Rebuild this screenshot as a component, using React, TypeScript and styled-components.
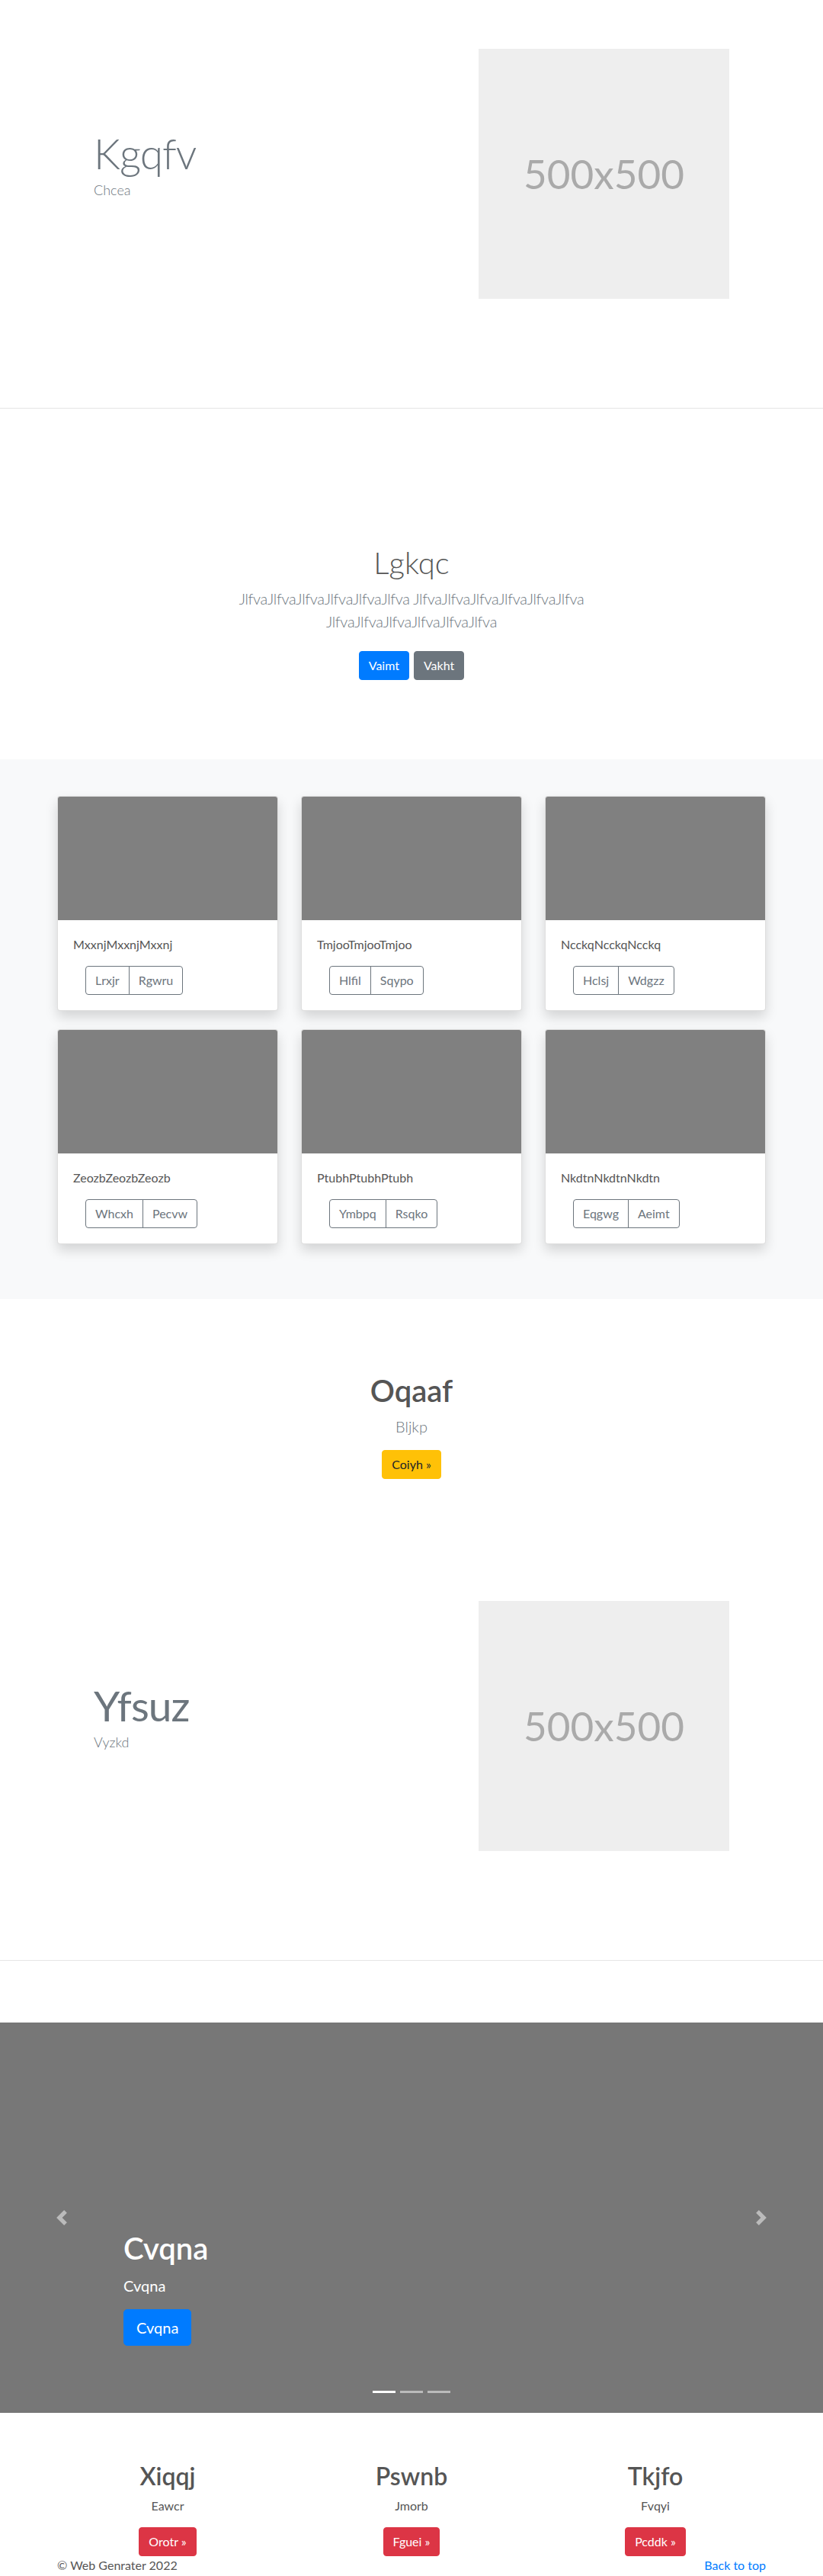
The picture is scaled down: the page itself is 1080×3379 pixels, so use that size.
import styled, { createGlobalStyle } from 'styled-components';

const GlobalStyle = createGlobalStyle`
	* {
		box-sizing: border-box;
	}
	body {
		margin: 0;
		font-family: Lato, 'Open Sans', sans-serif;
		font-size: 16px;
		line-height: 1.5;
		color: #555;
		background: #fff;
	}
`;

const Container = styled.div`
	width: 960px;
	margin: 0 auto;
	padding: 0 15px;
`;

/* feature block: text left, placeholder right */
const Feature = styled.section`
	padding: 64px 0 143px;
	border-bottom: 1px solid rgba(0, 0, 0, 0.1);
`;

const FeatureRow = styled.div`
	display: flex;
	align-items: center;
`;

const FeatureText = styled.div`
	flex: 1;
	padding: 0 48px 28px;
`;

const FeatureTitle = styled.h1<{ $weight: number }>`
	margin: 0 0 3px;
	font-size: 55px;
	line-height: 1.2;
	letter-spacing: -1px;
	font-weight: ${(p) => p.$weight};
	color: #6c757d;
`;

const FeatureSub = styled.p`
	margin: 0;
	font-size: 18px;
	line-height: 24px;
	font-weight: 300;
	color: #6c757d;
`;

const FeatureMedia = styled.div`
	flex: 1;
	display: flex;
	justify-content: flex-end;
	padding-right: 48px;
`;

const Placeholder = styled.div`
	width: 329px;
	height: 328px;
	background: #eee;
	color: #aaa;
	display: flex;
	align-items: center;
	justify-content: center;
	font-size: 53px;
	font-weight: 400;
`;

/* intro jumbotron */
const Intro = styled.section`
	padding: 178px 0 96px;
	text-align: center;
`;

const IntroTitle = styled.h1`
	margin: 0 0 8px;
	font-size: 40px;
	line-height: 1.2;
	font-weight: 300;
	color: #555;
`;

const Lead = styled.p<{ $narrow?: boolean }>`
	margin: 0 auto 16px;
	max-width: ${(p) => (p.$narrow ? '480px' : 'none')};
	font-size: 20px;
	line-height: 1.5;
	font-weight: 300;
	letter-spacing: ${(p) => (p.$narrow ? '-0.3px' : '0')};
	color: #6c757d;
`;

const Actions = styled.div`
	display: flex;
	justify-content: center;
	gap: 6px;
	padding: 8px 0;
`;

const palette = {
	primary: { bg: '#007bff', fg: '#fff' },
	secondary: { bg: '#6c757d', fg: '#fff' },
	warning: { bg: '#ffc107', fg: '#212529' },
	danger: { bg: '#dc3545', fg: '#fff' },
};

const Button = styled.a<{ $variant: keyof typeof palette; $large?: boolean }>`
	display: inline-block;
	padding: ${(p) => (p.$large ? '8px 16px' : '6px 12px')};
	font-size: ${(p) => (p.$large ? '20px' : '16px')};
	line-height: 1.5;
	border-radius: ${(p) => (p.$large ? '5px' : '4px')};
	border: 1px solid ${(p) => palette[p.$variant].bg};
	background: ${(p) => palette[p.$variant].bg};
	color: ${(p) => palette[p.$variant].fg};
	text-decoration: none;
	cursor: pointer;
`;

/* album of cards */
const Album = styled.section`
	background: #f8f9fa;
	padding: 48px 0 72px;
`;

const CardGrid = styled.div`
	display: grid;
	grid-template-columns: repeat(3, 290px);
	column-gap: 30px;
	row-gap: 24px;
`;

const Card = styled.div`
	background: #fff;
	border: 1px solid rgba(0, 0, 0, 0.125);
	border-radius: 4px;
	overflow: hidden;
	box-shadow: 0 8px 16px rgba(0, 0, 0, 0.15);
`;

const Thumb = styled.div`
	height: 162px;
	background: #808080;
`;

const CardBody = styled.div`
	padding: 20px;
`;

const CardText = styled.p`
	margin: 0 0 16px;
	color: #555;
`;

const BtnGroup = styled.div`
	display: inline-flex;
	margin-left: 16px;
`;

const GroupButton = styled.button`
	padding: 6px 12px;
	font-family: inherit;
	font-size: 16px;
	line-height: 1.5;
	color: #6c757d;
	background: transparent;
	border: 1px solid #6c757d;
	border-radius: 0;
	cursor: pointer;
	&:first-child {
		border-radius: 4px 0 0 4px;
	}
	&:last-child {
		border-radius: 0 4px 4px 0;
		margin-left: -1px;
	}
`;

/* centred callout */
const Callout = styled.section`
	padding: 96px 0;
	text-align: center;
`;

const CalloutTitle = styled.h1`
	margin: 0 0 8px;
	font-size: 40px;
	line-height: 1.2;
	font-weight: 600;
	color: #555;
`;

/* carousel */
const Carousel = styled.div`
	position: relative;
	height: 512px;
	margin-top: 81px;
	background: #777;
`;

const Control = styled.a<{ $side: 'left' | 'right' }>`
	position: absolute;
	top: 0;
	bottom: 0;
	${(p) => p.$side}: 0;
	width: 15%;
	display: flex;
	align-items: center;
	justify-content: center;
	opacity: 0.5;
	svg {
		width: 20px;
		height: 20px;
	}
`;

const Caption = styled.div`
	position: absolute;
	left: 15%;
	right: 15%;
	bottom: 48px;
	padding: 20px 0;
	color: #fff;
	text-align: left;
	h1 {
		margin: 0 0 10px;
		font-size: 40px;
		line-height: 1.2;
		font-weight: 600;
	}
	p {
		margin: 0 0 16px;
		font-size: 20px;
		line-height: 30px;
	}
	p:last-child {
		margin-bottom: 20px;
	}
`;

const Indicators = styled.ol`
	position: absolute;
	left: 0;
	right: 0;
	bottom: 26px;
	margin: 0;
	padding: 0;
	list-style: none;
	display: flex;
	justify-content: center;
	gap: 6px;
`;

const Indicator = styled.li<{ $active?: boolean }>`
	width: 30px;
	height: 3px;
	background: #fff;
	opacity: ${(p) => (p.$active ? 1 : 0.5)};
`;

/* marketing columns */
const Marketing = styled.div`
	width: 960px;
	margin: 64px auto 0;
	display: grid;
	grid-template-columns: repeat(3, 1fr);
	text-align: center;
	h2 {
		margin: 0 0 8px;
		font-size: 32px;
		line-height: 1.2;
		font-weight: 600;
		color: #555;
	}
	p {
		margin: 0 0 16px;
	}
	p:last-child {
		margin: 0;
	}
`;

const Footer = styled(Container)`
	display: flex;
	justify-content: space-between;
	p {
		margin: 0;
	}
	a {
		color: #007bff;
		text-decoration: none;
	}
`;

const cards = [
	{ text: 'MxxnjMxxnjMxxnj', a: 'Lrxjr', b: 'Rgwru' },
	{ text: 'TmjooTmjooTmjoo', a: 'Hlfil', b: 'Sqypo' },
	{ text: 'NcckqNcckqNcckq', a: 'Hclsj', b: 'Wdgzz' },
	{ text: 'ZeozbZeozbZeozb', a: 'Whcxh', b: 'Pecvw' },
	{ text: 'PtubhPtubhPtubh', a: 'Ymbpq', b: 'Rsqko' },
	{ text: 'NkdtnNkdtnNkdtn', a: 'Eqgwg', b: 'Aeimt' },
];

const columns = [
	{ title: 'Xiqqj', text: 'Eawcr', cta: 'Orotr' },
	{ title: 'Pswnb', text: 'Jmorb', cta: 'Fguei' },
	{ title: 'Tkjfo', text: 'Fvqyi', cta: 'Pcddk' },
];

function FeatureBlock({ title, sub, weight }: { title: string; sub: string; weight: number }) {
	return (
		<Feature>
			<Container>
				<FeatureRow>
					<FeatureText>
						<FeatureTitle $weight={weight}>{title}</FeatureTitle>
						<FeatureSub>{sub}</FeatureSub>
					</FeatureText>
					<FeatureMedia>
						<Placeholder>500x500</Placeholder>
					</FeatureMedia>
				</FeatureRow>
			</Container>
		</Feature>
	);
}

export default function App() {
	return (
		<>
			<GlobalStyle />
			<FeatureBlock title='Kgqfv' sub='Chcea' weight={300} />

			<Intro>
				<Container>
					<IntroTitle>Lgkqc</IntroTitle>
					<Lead $narrow>
						JlfvaJlfvaJlfvaJlfvaJlfvaJlfva JlfvaJlfvaJlfvaJlfvaJlfvaJlfva
						JlfvaJlfvaJlfvaJlfvaJlfvaJlfva
					</Lead>
					<Actions>
						<Button $variant='primary'>Vaimt</Button>
						<Button $variant='secondary'>Vakht</Button>
					</Actions>
				</Container>
			</Intro>

			<Album>
				<Container>
					<CardGrid>
						{cards.map((card) => (
							<Card key={card.text}>
								<Thumb />
								<CardBody>
									<CardText>{card.text}</CardText>
									<BtnGroup>
										<GroupButton>{card.a}</GroupButton>
										<GroupButton>{card.b}</GroupButton>
									</BtnGroup>
								</CardBody>
							</Card>
						))}
					</CardGrid>
				</Container>
			</Album>

			<Callout>
				<CalloutTitle>Oqaaf</CalloutTitle>
				<Lead>Bljkp</Lead>
				<Button $variant='warning'>Coiyh »</Button>
			</Callout>

			<FeatureBlock title='Yfsuz' sub='Vyzkd' weight={400} />

			<Carousel>
				<Indicators>
					<Indicator $active />
					<Indicator />
					<Indicator />
				</Indicators>
				<Caption>
					<h1>Cvqna</h1>
					<p>Cvqna</p>
					<p>
						<Button $variant='primary' $large>
							Cvqna
						</Button>
					</p>
				</Caption>
				<Control $side='left'>
					<svg viewBox='0 0 8 8' fill='#fff'>
						<path d='M5.25 0l-4 4 4 4 1.5-1.5-2.5-2.5 2.5-2.5-1.5-1.5z' />
					</svg>
				</Control>
				<Control $side='right'>
					<svg viewBox='0 0 8 8' fill='#fff'>
						<path d='M2.75 0l-1.5 1.5 2.5 2.5-2.5 2.5 1.5 1.5 4-4-4-4z' />
					</svg>
				</Control>
			</Carousel>

			<Marketing>
				{columns.map((col) => (
					<div key={col.title}>
						<h2>{col.title}</h2>
						<p>{col.text}</p>
						<p>
							<Button $variant='danger'>{col.cta} »</Button>
						</p>
					</div>
				))}
			</Marketing>

			<Footer as='footer'>
				<p>© Web Genrater 2022</p>
				<p>
					<a href='#'>Back to top</a>
				</p>
			</Footer>
		</>
	);
}
